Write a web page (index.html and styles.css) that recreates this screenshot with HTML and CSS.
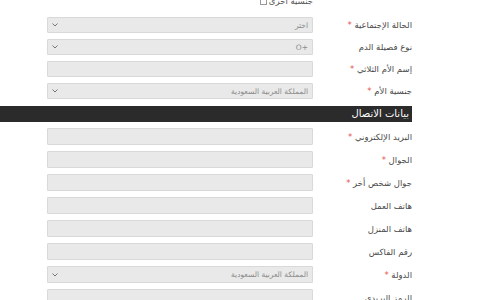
FILE: index.html
```html
<!DOCTYPE html>
<html lang="ar" dir="rtl">
<head>
  <meta charset="UTF-8">
  <title>بيانات المتقدم</title>
  <link rel="stylesheet" href="styles.css">
</head>
<body>
  <div class="form">

    <!-- Personal -->
    <div class="check-row">
      <span class="spacer"></span>
      <label class="check"><span class="box"></span> جنسية أخرى</label>
    </div>

    <div class="section tight">
      <div class="form-group">
        <label class="label">الحالة الإجتماعية <b class="req">*</b></label>
        <div class="select"><span>اختر</span><svg width="6" height="4" viewBox="0 0 6 4"><polyline points="0.5,0.5 3,3 5.5,0.5" fill="none" stroke="#777" stroke-width="1"/></svg></div>
      </div>
      <div class="form-group">
        <label class="label">نوع فصيلة الدم</label>
        <div class="select"><span dir="ltr">O+</span><svg width="6" height="4" viewBox="0 0 6 4"><polyline points="0.5,0.5 3,3 5.5,0.5" fill="none" stroke="#777" stroke-width="1"/></svg></div>
      </div>
      <div class="form-group">
        <label class="label">إسم الأم الثلاثي <b class="req">*</b></label>
        <input class="input" type="text">
      </div>
      <div class="form-group">
        <label class="label">جنسية الأم <b class="req">*</b></label>
        <div class="select"><span>المملكة العربية السعودية</span><svg width="6" height="4" viewBox="0 0 6 4"><polyline points="0.5,0.5 3,3 5.5,0.5" fill="none" stroke="#777" stroke-width="1"/></svg></div>
      </div>
    </div>

    <!-- Contact -->
    <div class="section-title">بيانات الاتصال</div>

    <div class="section">
      <div class="form-group">
        <label class="label">البريد الإلكتروني <b class="req">*</b></label>
        <input class="input" type="text">
      </div>
      <div class="form-group">
        <label class="label">الجوال <b class="req">*</b></label>
        <input class="input" type="text">
      </div>
      <div class="form-group">
        <label class="label">جوال شخص أخر <b class="req">*</b></label>
        <input class="input" type="text">
      </div>
      <div class="form-group">
        <label class="label">هاتف العمل</label>
        <input class="input" type="text">
      </div>
      <div class="form-group">
        <label class="label">هاتف المنزل</label>
        <input class="input" type="text">
      </div>
      <div class="form-group">
        <label class="label">رقم الفاكس</label>
        <input class="input" type="text">
      </div>
      <div class="form-group">
        <label class="label">الدولة <b class="req">*</b></label>
        <div class="select"><span>المملكة العربية السعودية</span><svg width="6" height="4" viewBox="0 0 6 4"><polyline points="0.5,0.5 3,3 5.5,0.5" fill="none" stroke="#777" stroke-width="1"/></svg></div>
      </div>
      <div class="form-group">
        <label class="label">الرمز البريدي</label>
        <input class="input" type="text">
      </div>
    </div>

  </div>
</body>
</html>
```

FILE: styles.css
```css
body {
  margin: 0;
  padding: 0;
  background: #fff;
  font-family: "DejaVu Sans", sans-serif;
  overflow: hidden;
}
.form {
  width: 412px;
  margin-left: 0;
  margin-right: auto;
}
.check-row {
  display: grid;
  grid-template-columns: 99px 266px;
  height: 12px;
  margin-top: -5px;
  margin-bottom: 10px;
  font-size: 8.5px;
  line-height: 12px;
  color: #555;
}
.check {
  display: flex;
  align-items: center;
  gap: 2px;
}
.box {
  width: 5px;
  height: 5px;
  border: 1px solid #999;
  background: #fff;
  order: 2;
}
.section {
  display: flex;
  flex-direction: column;
  gap: 6px;
  margin-bottom: 6px;
}
.section.tight {
  margin-bottom: 7px;
}
.section.tight .input,
.section.tight .select {
  height: 16px;
}
.form-group {
  display: grid;
  grid-template-columns: 99px 266px;
  align-items: center;
}
.label {
  font-size: 8.5px;
  color: #4a4a4a;
  white-space: nowrap;
}
.req {
  color: #e5534b;
  font-weight: normal;
}
.input,
.select {
  box-sizing: border-box;
  height: 17px;
  margin: 0;
  padding: 0 4px;
  background: #e9e9e9;
  border: 1px solid #d9d9d9;
  border-radius: 1px;
  font-family: inherit;
}
.select {
  display: flex;
  align-items: center;
  justify-content: space-between;
  font-size: 7.5px;
  color: #8a8a8a;
}
.section-title {
  box-sizing: border-box;
  height: 16px;
  margin-bottom: 6px;
  padding: 0 3px;
  background: #2b2b2b;
  color: #fff;
  font-size: 10px;
  line-height: 16px;
}
```
